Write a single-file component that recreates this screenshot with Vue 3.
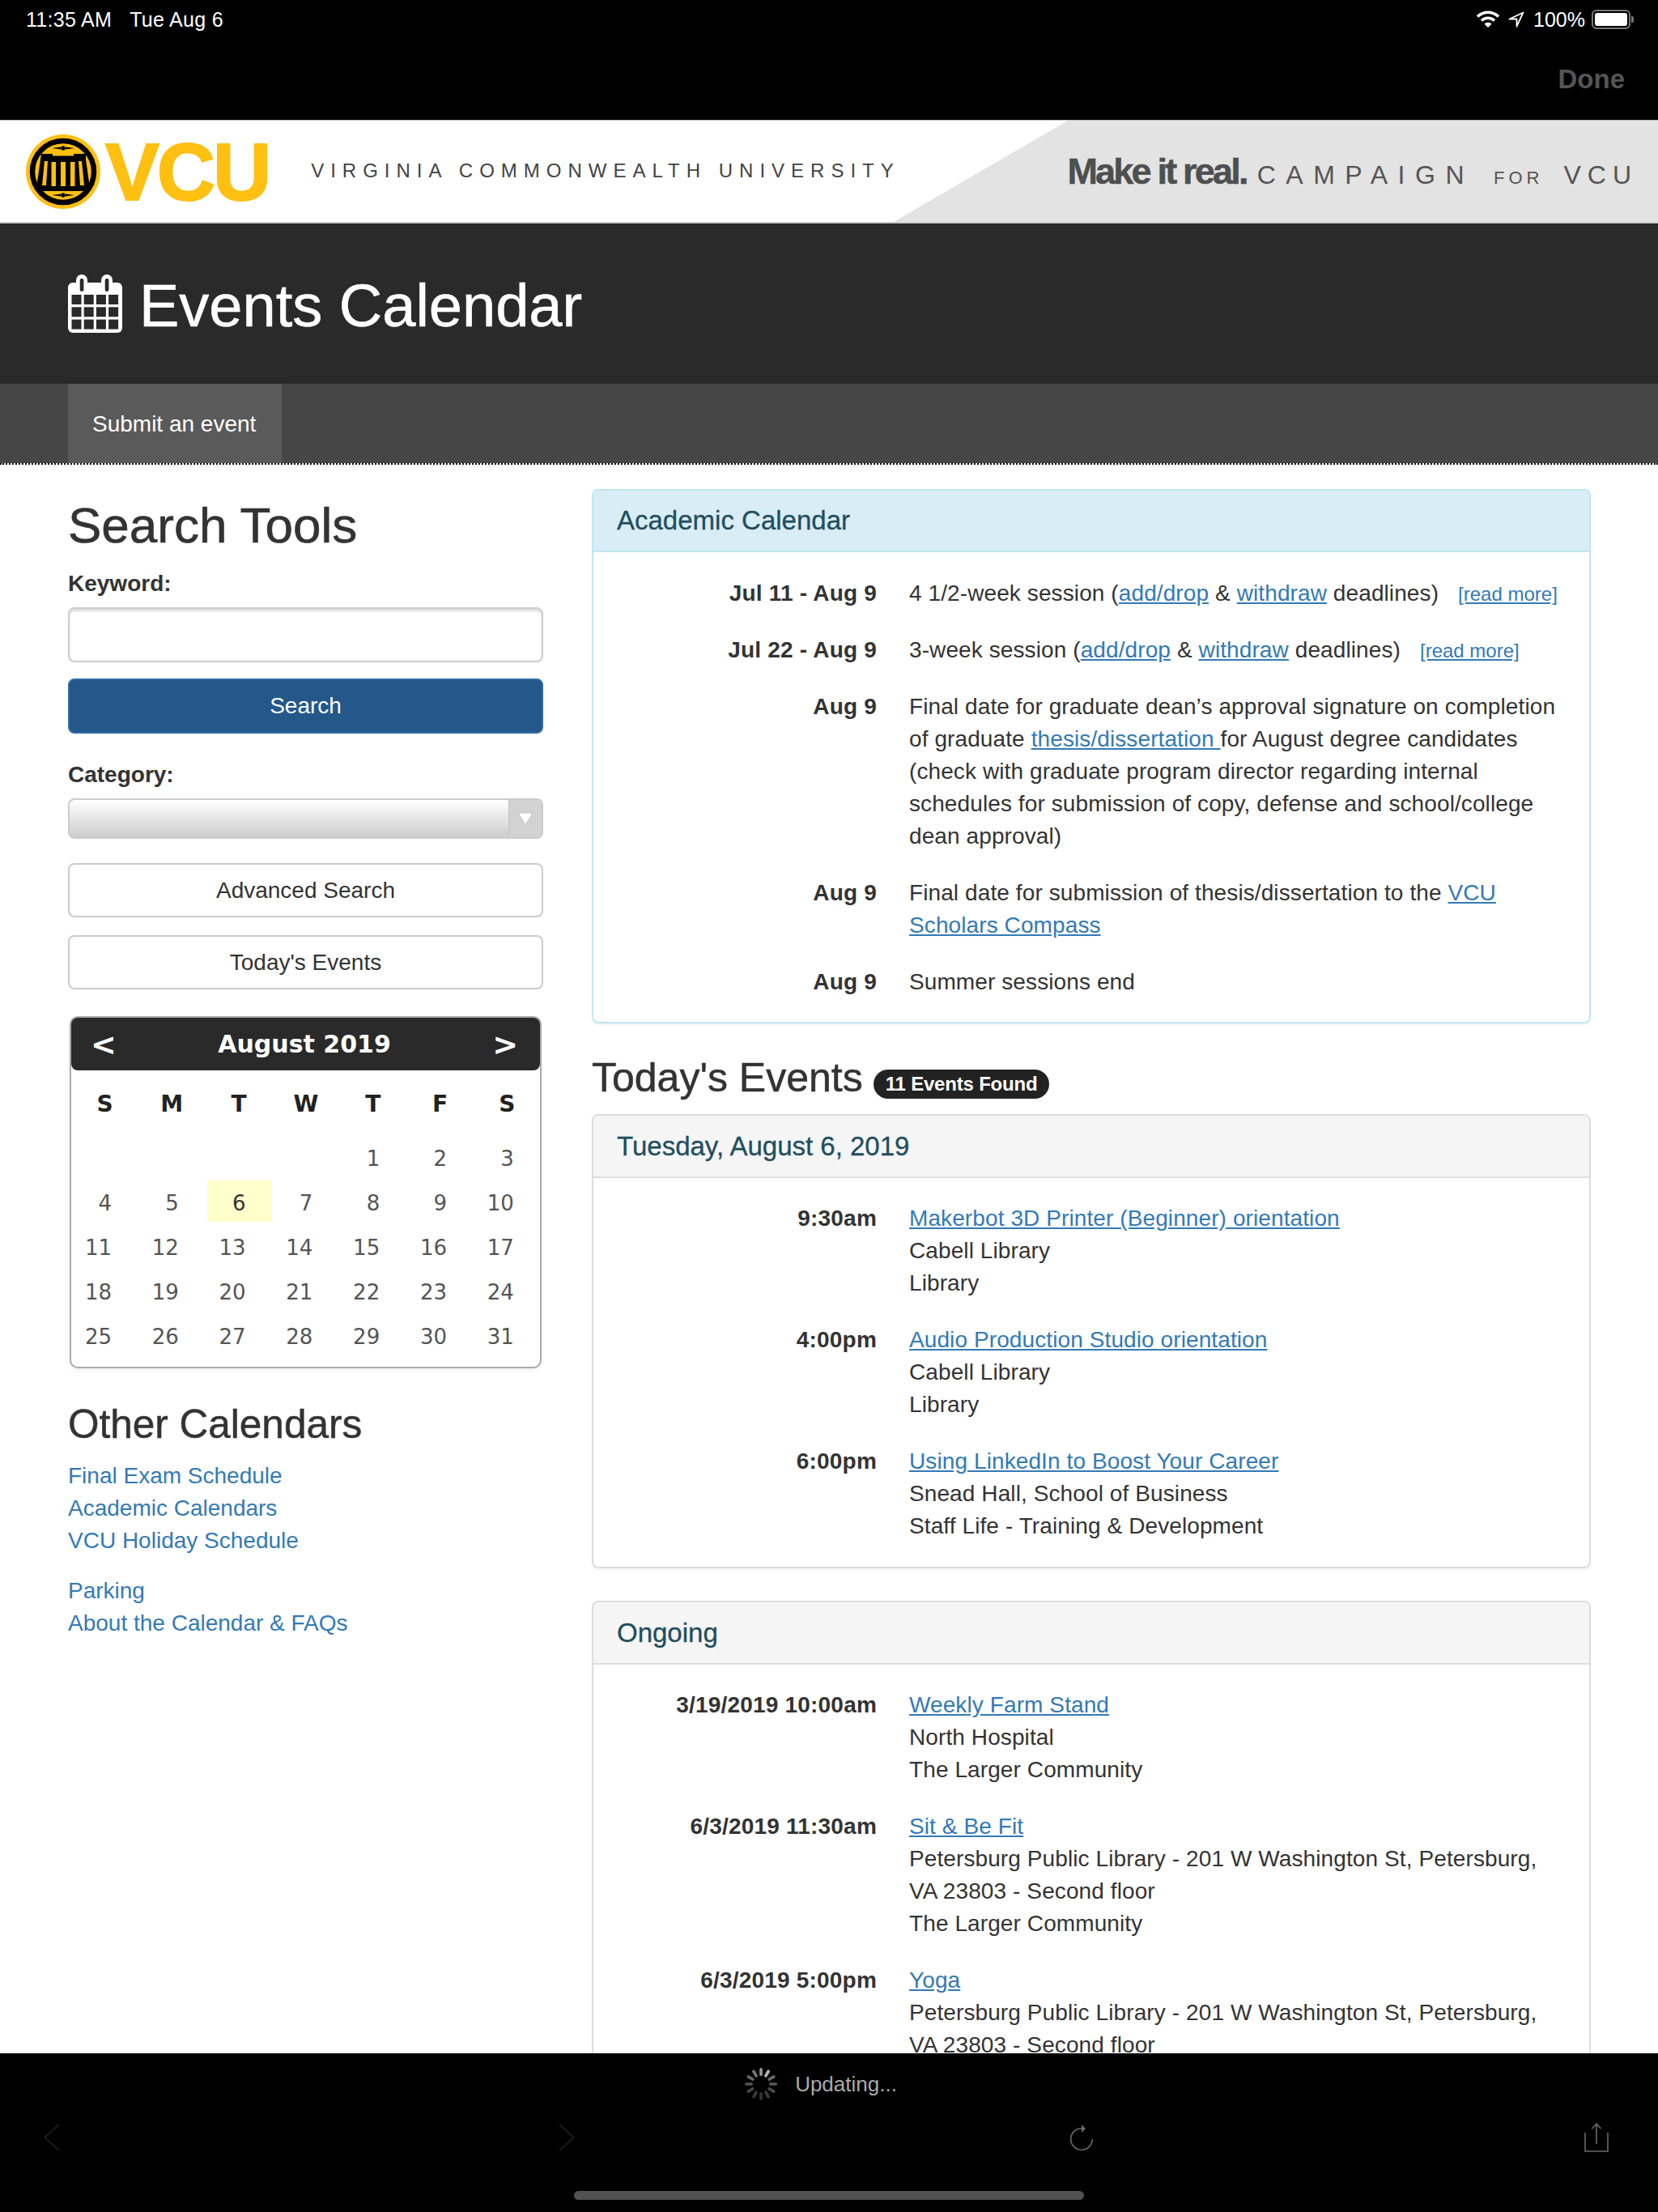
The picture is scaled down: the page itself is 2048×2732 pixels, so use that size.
<template>
<div class="screen">

    <!-- iOS status bar + Done -->
    <div class="top-bar">
        <div class="status-row">
            <div class="status-time">
                <span>11:35 AM</span>
                <span>Tue Aug 6</span>
            </div>
            <div class="status-icons">
                <svg width="28" height="22" viewBox="0 0 28 22">
                    <path d="M1 7.500C8.500 .5 19.500 .5 27 7.500" class="wifi-line" />
                    <path d="M6 12.500C10.500 8.300 17.500 8.300 22 12.500" class="wifi-line" />
                    <path d="M14 21L9.500 16.500C12 14.200 16 14.200 18.500 16.500Z" fill="#fff" />
                </svg>
                <svg width="20" height="20" viewBox="0 0 20 20">
                    <path d="M18.500 1.500L1.500 9.500H10.500V18.500Z" fill="none" stroke="#fff" stroke-width="1.800" stroke-linejoin="round" />
                </svg>
                <span>100%</span>
                <div class="battery">
                    <div class="battery-fill"></div>
                </div>
            </div>
        </div>
        <div class="done-row">Done</div>
    </div>

    <!-- VCU branding strip -->
    <div class="brand">
        <div class="brand-left">
            <svg class="seal" width="92" height="92" viewBox="0 0 92 92">
                <circle cx="46" cy="46" r="46" fill="#ffc012" />
                <circle cx="46" cy="46" r="38" fill="#ffc012" stroke="#000" stroke-width="6.500" />
                <path d="M19 24H33V26.500H59V24H74V31L79 66V70H13V66L18 31Z" fill="#000" />
                <path d="M23 33H27L25 63H20Z" fill="#ffc012" />
                <path d="M65 33H69L72 63H67Z" fill="#ffc012" />
                <rect x="31.500" y="34" width="5.500" height="30" fill="#ffc012" />
                <rect x="43" y="34" width="6" height="30" fill="#ffc012" />
                <rect x="55" y="34" width="5.500" height="30" fill="#ffc012" />
                <circle cx="46" cy="17" r="2.700" fill="#000" />
                <circle cx="46" cy="75" r="2.700" fill="#000" />
                <path d="M32 17L43 15.500V18.500ZM60 17L49 15.500V18.500ZM32 75L43 73.500V76.500ZM60 75L49 73.500V76.500Z" fill="#000" />
            </svg>
            <span class="vcu">VCU</span>
            <span class="vcu-name">VIRGINIA COMMONWEALTH UNIVERSITY</span>
        </div>
        <div class="campaign">
            <span class="make-real">Make it real.</span>
            <span class="camp-word">CAMPAIGN</span>
            <span class="camp-for">FOR</span>
            <span class="camp-vcu">VCU</span>
        </div>
    </div>

    <!-- Title -->
    <div class="hero">
        <svg class="hero-icon" width="67" height="72" viewBox="0 0 67 72">
            <rect x="0" y="10" width="67" height="62" rx="6" fill="#fff" />
            <rect x="10" y="0" width="14" height="24" rx="7" fill="#fff" />
            <rect x="41" y="0" width="14" height="24" rx="7" fill="#fff" />
            <rect x="14.700" y="5" width="4.700" height="16" rx="2.300" fill="#2a2a2a" />
            <rect x="45.700" y="5" width="4.700" height="16" rx="2.300" fill="#2a2a2a" />
            <g fill="#2a2a2a">
                <template v-for="r in 3" :key="r">
                    <rect v-for="c in 4" :key="c" :x="4.500 + (c - 1) * 15.200" :y="25 + (r - 1) * 15.300" width="12" height="12" />
                </template>
            </g>
        </svg>
        <h1>Events Calendar</h1>
    </div>

    <!-- Nav -->
    <div class="nav">
        <a class="nav-tab">Submit an event</a>
    </div>

    <!-- Page -->
    <div class="page">

        <aside class="sidebar">
            <h2>Search Tools</h2>

            <label class="kw-label">Keyword:</label>
            <input class="kw-input" type="text" />
            <button class="btn btn-search">Search</button>

            <label class="cat-label">Category:</label>
            <div class="select">
                <div class="select-arrow">
                    <svg width="20" height="17" viewBox="0 0 20 17">
                        <path d="M1 1H19L10 16Z" fill="#fff" stroke="#c4c4c4" />
                    </svg>
                </div>
            </div>

            <button class="btn btn-adv">Advanced Search</button>
            <button class="btn btn-today">Today's Events</button>

            <div class="cal">
                <div class="cal-head">
                    <span class="cal-nav">&lt;</span>
                    <span>August 2019</span>
                    <span class="cal-nav">&gt;</span>
                </div>
                <div class="cal-grid">
                    <div v-for="(d, i) in weekdays" :key="'w' + i" class="cal-wd">{{ d }}</div>
                    <div
                        v-for="(d, i) in days"
                        :key="'d' + i"
                        class="cal-day"
                        :class="{ today: d === 6 }"
                    >{{ d }}</div>
                </div>
            </div>

            <h3>Other Calendars</h3>
            <ul class="side-links">
                <li v-for="l in links1" :key="l"><a>{{ l }}</a></li>
            </ul>
            <ul class="side-links second">
                <li v-for="l in links2" :key="l"><a>{{ l }}</a></li>
            </ul>
        </aside>

        <main class="main">

            <section class="panel panel-info">
                <div class="panel-head">Academic Calendar</div>
                <dl class="panel-body">
                    <dt>Jul 11 - Aug 9</dt>
                    <dd>4 1/2-week session (<a class="u">add/drop</a> &amp; <a class="u">withdraw</a> deadlines)<a class="u more">[read more]</a></dd>
                    <dt>Jul 22 - Aug 9</dt>
                    <dd>3-week session (<a class="u">add/drop</a> &amp; <a class="u">withdraw</a> deadlines)<a class="u more">[read more]</a></dd>
                    <dt>Aug 9</dt>
                    <dd>Final date for graduate dean’s approval signature on completion of graduate <a class="u">thesis/dissertation </a>for August degree candidates (check with graduate program director regarding internal schedules for submission of copy, defense and school/college dean approval)</dd>
                    <dt>Aug 9</dt>
                    <dd>Final date for submission of thesis/dissertation to the <a class="u">VCU Scholars Compass</a></dd>
                    <dt>Aug 9</dt>
                    <dd>Summer sessions end</dd>
                </dl>
            </section>

            <h2 class="events-title">Today's Events <span class="badge">11 Events Found</span></h2>

            <section v-for="group in groups" :key="group.title" class="panel">
                <div class="panel-head">{{ group.title }}</div>
                <dl class="panel-body">
                    <template v-for="ev in group.events" :key="ev.name">
                        <dt>{{ ev.time }}</dt>
                        <dd>
                            <a class="u">{{ ev.name }}</a><br />
                            {{ ev.place }}<br />
                            {{ ev.cat }}
                        </dd>
                    </template>
                </dl>
            </section>

        </main>
    </div>

    <!-- Safari bottom bar -->
    <div class="bottom-bar">
        <div class="updating">
            <svg width="40" height="40" viewBox="-20 -20 40 40">
                <rect
                    v-for="n in 12"
                    :key="n"
                    x="-1.800"
                    y="-20"
                    width="3.600"
                    height="10"
                    rx="1.800"
                    :fill="spokeColor(n)"
                    :transform="'rotate(' + (n - 1) * 30 + ')'"
                />
            </svg>
            <span>Updating...</span>
        </div>
        <div class="toolbar">
            <svg width="30" height="36" viewBox="0 0 30 36">
                <path d="M23.500 2L6.500 18L23.500 34" class="tool-line dim" />
            </svg>
            <svg width="30" height="36" viewBox="0 0 30 36">
                <path d="M6.500 2L23.500 18L6.500 34" class="tool-line dim" />
            </svg>
            <svg width="30" height="36" viewBox="0 0 30 36">
                <path d="M15 6.700A13.300 13.300 0 1 0 28.300 20" class="tool-line" />
                <path d="M15 2.300L20 7L15 12Z" fill="#6a6a6a" />
            </svg>
            <svg width="30" height="36" viewBox="0 0 30 36">
                <path d="M1 12V35H29V12M15 26V1M9.500 7L15 1L20.500 7" class="tool-line" />
            </svg>
        </div>
        <div class="home-indicator"></div>
    </div>

</div>
</template>

<script setup>

const weekdays = ['S', 'M', 'T', 'W', 'T', 'F', 'S']

const days = ['', '', '', '', 1, 2, 3]
for (let d = 4; d <= 31; d++) {
    days.push(d)
}

const links1 = ['Final Exam Schedule', 'Academic Calendars', 'VCU Holiday Schedule']
const links2 = ['Parking', 'About the Calendar & FAQs']

const groups = [
    {
        title: 'Tuesday, August 6, 2019',
        events: [
            { time: '9:30am', name: 'Makerbot 3D Printer (Beginner) orientation', place: 'Cabell Library', cat: 'Library' },
            { time: '4:00pm', name: 'Audio Production Studio orientation', place: 'Cabell Library', cat: 'Library' },
            { time: '6:00pm', name: 'Using LinkedIn to Boost Your Career', place: 'Snead Hall, School of Business', cat: 'Staff Life - Training & Development' }
        ]
    },
    {
        title: 'Ongoing',
        events: [
            { time: '3/19/2019 10:00am', name: 'Weekly Farm Stand', place: 'North Hospital', cat: 'The Larger Community' },
            { time: '6/3/2019 11:30am', name: 'Sit & Be Fit', place: 'Petersburg Public Library - 201 W Washington St, Petersburg, VA 23803 - Second floor', cat: 'The Larger Community' },
            { time: '6/3/2019 5:00pm', name: 'Yoga', place: 'Petersburg Public Library - 201 W Washington St, Petersburg, VA 23803 - Second floor', cat: 'The Larger Community' }
        ]
    }
]

// spinner fades clockwise from the top-right spoke
function spokeColor(n)
{
    const shades = ['#9a9a9a', '#b5b5b5', '#6a6a6a', '#5a5a5a', '#4a4a4a', '#3c3c3c', '#343434', '#3a3a3a', '#444', '#555', '#666', '#777']
    return shades[n - 1]
}

</script>

<style>
html, body {
    margin: 0;
    background: #fff;
}
</style>

<style scoped>

.screen {
    width: 2048px;
    height: 2732px;
    display: flex;
    flex-direction: column;
    overflow: hidden;
    font-family: "Liberation Sans", Arial, sans-serif;
    font-size: 28px;
    line-height: 40px;
    color: #333;
    background: #fff;
}

/* top */

.top-bar {
    height: 148px;
    flex: none;
    background: #000;
    color: #fff;
    padding: 0 30px 0 32px;
    box-sizing: border-box;
}

.status-row {
    height: 48px;
    display: flex;
    justify-content: space-between;
    align-items: center;
    font-size: 25px;
    padding-right: 4px;
}

.status-time {
    display: flex;
    gap: 22px;
    letter-spacing: .3px;
}

.status-icons {
    display: flex;
    align-items: center;
    gap: 11px;
}

.wifi-line {
    fill: none;
    stroke: #fff;
    stroke-width: 3.500;
}

.battery {
    width: 48px;
    height: 24px;
    margin-left: -3px;
    border: 2px solid #777;
    border-radius: 6px;
    box-sizing: border-box;
    padding: 2px;
    position: relative;
}

.battery::after {
    content: "";
    position: absolute;
    right: -6px;
    top: 6px;
    width: 3px;
    height: 8px;
    background: #777;
    border-radius: 0 2px 2px 0;
}

.battery-fill {
    height: 100%;
    background: #fff;
    border-radius: 3px;
}

.done-row {
    text-align: right;
    font-size: 33px;
    font-weight: 700;
    color: #555;
    line-height: 40px;
    margin-top: 30px;
    padding-right: 11px;
}

/* brand strip */

.brand {
    height: 128px;
    flex: none;
    box-sizing: border-box;
    border-top: 1px solid #bbb;
    border-bottom: 2px solid #ccc;
    display: flex;
    justify-content: space-between;
    background: #fff;
    position: relative;
}

.brand::before {
    content: "";
    position: absolute;
    left: 1104px;
    right: 0;
    top: 0;
    bottom: 0;
    background: #e3e3e3;
    clip-path: polygon(215px 0, 100% 0, 100% 100%, 0 100%);
}

.brand-left {
    display: flex;
    align-items: center;
    padding-left: 32px;
    position: relative;
}

.seal {
    flex: none;
}

.vcu {
    font-size: 100px;
    font-weight: 700;
    line-height: 100px;
    letter-spacing: -3px;
    color: #ffc012;
    margin-left: 6px;
    -webkit-text-stroke: 2px #ffc012;
}

.vcu-name {
    font-size: 24px;
    letter-spacing: 8px;
    color: #444;
    margin-left: 52px;
    margin-top: -2px;
}

.campaign {
    display: flex;
    align-items: baseline;
    position: relative;
    padding: 43px 33px 0 0;
    color: #555;
}

.make-real {
    font-size: 45px;
    font-weight: 700;
    letter-spacing: -2.800px;
    color: #4d4f50;
    -webkit-text-stroke: .5px #4d4f50;
}

.camp-word {
    font-size: 32px;
    letter-spacing: 12.500px;
    margin-left: 13px;
}

.camp-for {
    font-size: 22px;
    letter-spacing: 5px;
    margin-left: 24px;
}

.camp-vcu {
    font-size: 32px;
    letter-spacing: 8px;
    margin-left: 25px;
    margin-right: -8px;
}

/* hero */

.hero {
    height: 198px;
    flex: none;
    background: #2a2a2a;
    display: flex;
    align-items: center;
    padding: 0 84px;
    gap: 21px;
    color: #fff;
}

.hero-icon {
    flex: none;
}

.hero h1 {
    margin: 6px 0 0;
    font-size: 74px;
    font-weight: 400;
    line-height: 80px;
    -webkit-text-stroke: .6px #fff;
}

/* nav */

.nav {
    height: 100px;
    flex: none;
    box-sizing: border-box;
    background: #464646;
    background-clip: padding-box;
    border-bottom: 2px dotted #111;
    padding: 0 84px;
    display: flex;
}

.nav-tab {
    background: #5a5a5a;
    color: #fff;
    padding: 0 32px 0 30px;
    line-height: 100px;
    height: 98px;
}

/* layout */

.page {
    flex: 1;
    min-height: 0;
    overflow: hidden;
    display: grid;
    grid-template-columns: 587px 1234px;
    gap: 60px;
    padding: 0 84px;
}

.sidebar {
    padding-top: 42px;
}

.sidebar h2 {
    margin: 0 0 19px;
    font-size: 62px;
    line-height: 66px;
    font-weight: 400;
    -webkit-text-stroke: .6px #333;
}

label {
    display: block;
    font-weight: 700;
    margin-bottom: 9px;
}

.kw-input {
    display: block;
    width: 100%;
    height: 68px;
    box-sizing: border-box;
    border: 2px solid #ccc;
    border-radius: 8px;
    box-shadow: inset 0 3px 3px rgba(0,0,0,0.14);
    background: #fff;
}

.btn {
    display: block;
    width: 100%;
    height: 67px;
    box-sizing: border-box;
    border: 2px solid #ccc;
    border-radius: 8px;
    background: #fff;
    color: #333;
    font: inherit;
    padding: 0;
}

.btn-search {
    margin-top: 20px;
    height: 68px;
    background: #24578a;
    border-color: #2e6da4;
    color: #fff;
}

.cat-label {
    margin-top: 31px;
}

.select {
    height: 50px;
    box-sizing: border-box;
    border: 2px solid #ccc;
    border-radius: 8px;
    background: linear-gradient(to bottom, #fff, #ccc);
    display: flex;
    justify-content: flex-end;
}

.select-arrow {
    width: 40px;
    background: #d2d2d2;
    border-left: 1px solid #c4c4c4;
    border-radius: 0 6px 6px 0;
    display: flex;
    align-items: center;
    justify-content: center;
}

.btn-adv {
    margin-top: 30px;
}

.btn-today {
    margin-top: 22px;
}

/* mini calendar */

.cal {
    margin: 33px 2px 0;
    height: 435px;
    box-sizing: border-box;
    border: 2px solid #aaa;
    border-radius: 10px;
    box-shadow: 0 3px 5px rgba(0,0,0,0.06);
    font-family: "DejaVu Sans", Verdana, sans-serif;
}

.cal-head {
    height: 65px;
    background: #2a2a2a;
    border-radius: 8px;
    color: #fff;
    font-size: 30px;
    font-weight: 700;
    display: flex;
    justify-content: space-between;
    align-items: center;
    padding: 0 27px 0 24px;
}

.cal-nav {
    font-size: 38px;
}

.cal-grid {
    display: grid;
    grid-template-columns: repeat(7, 79px);
    grid-auto-rows: 51px;
    gap: 4px 3.800px;
    padding: 16px 0 0 2px;
}

.cal-wd {
    text-align: center;
    font-weight: 700;
    font-size: 28px;
    line-height: 51px;
    color: #222;
    margin-bottom: 10px;
}

.cal-day {
    text-align: right;
    padding-right: 31px;
    font-size: 26px;
    line-height: 56px;
    color: #555;
}

.cal-day:nth-child(n+8) {
    position: relative;
    top: 10px;
}

.cal-day.today {
    background: #ffc;
    color: #333;
}

.sidebar h3 {
    margin: 40px 0 16px;
    font-size: 49.500px;
    line-height: 57px;
    font-weight: 400;
    -webkit-text-stroke: .5px #333;
}

.side-links {
    list-style: none;
    margin: 0;
    padding: 0;
    color: #337ab7;
}

.side-links.second {
    margin-top: 22px;
}

/* main column */

.main {
    padding-top: 30px;
    min-width: 0;
}

.panel {
    border: 2px solid #ddd;
    border-radius: 8px;
    margin-bottom: 40px;
    box-shadow: 0 2px 2px rgba(0,0,0,0.05);
}

.panel-head {
    height: 75px;
    line-height: 75px;
    padding: 0 29px;
    background: #f5f5f5;
    border-bottom: 2px solid #ddd;
    border-radius: 6px 6px 0 0;
    font-size: 33px;
    color: #1f4e5f;
    -webkit-text-stroke: .3px #1f4e5f;
}

.panel-info {
    border-color: #bce8f1;
}

.panel-info .panel-head {
    height: 74px;
    line-height: 74px;
    background: #d9edf7;
    border-bottom-color: #bce8f1;
}

.panel-body {
    margin: 0;
    padding: 30px;
    display: grid;
    grid-template-columns: 320px 1fr;
    column-gap: 40px;
    row-gap: 30px;
}

.panel-info .panel-body {
    padding-top: 31px;
    padding-bottom: 29px;
}

dt {
    font-weight: 700;
    text-align: right;
    letter-spacing: .2px;
}

dd {
    margin: 0;
    letter-spacing: .1px;
}

.u {
    color: #337ab7;
    text-decoration: underline;
}

.more {
    font-size: 24px;
    line-height: 1;
    margin-left: 24px;
    letter-spacing: 0;
}

.events-title {
    margin: 3px 0 17px;
    font-size: 50px;
    line-height: 55px;
    font-weight: 400;
    -webkit-text-stroke: .5px #333;
    display: flex;
    align-items: center;
    gap: 13px;
}

.badge {
    background: #222;
    color: #fff;
    font-size: 24px;
    font-weight: 700;
    line-height: 36px;
    letter-spacing: -.2px;
    padding: 0 15px;
    border-radius: 18px;
    margin-top: 14px;
    -webkit-text-stroke: 0;
}

/* bottom */

.bottom-bar {
    height: 196px;
    flex: none;
    background: #000;
    position: relative;
    box-sizing: border-box;
    padding-top: 18px;
}

.updating {
    display: flex;
    justify-content: center;
    align-items: center;
    gap: 22px;
    color: #aaa;
    font-size: 26px;
    padding-right: 20px;
}

.toolbar {
    display: flex;
    justify-content: space-between;
    align-items: center;
    padding: 0 61px 0 49px;
    margin-top: 28px;
}

.tool-line {
    fill: none;
    stroke: #6a6a6a;
    stroke-width: 1.600;
}

.tool-line.dim {
    stroke: #222;
}

.home-indicator {
    position: absolute;
    left: 709px;
    top: 170px;
    width: 630px;
    height: 11px;
    border-radius: 6px;
    background: #515151;
}

</style>
